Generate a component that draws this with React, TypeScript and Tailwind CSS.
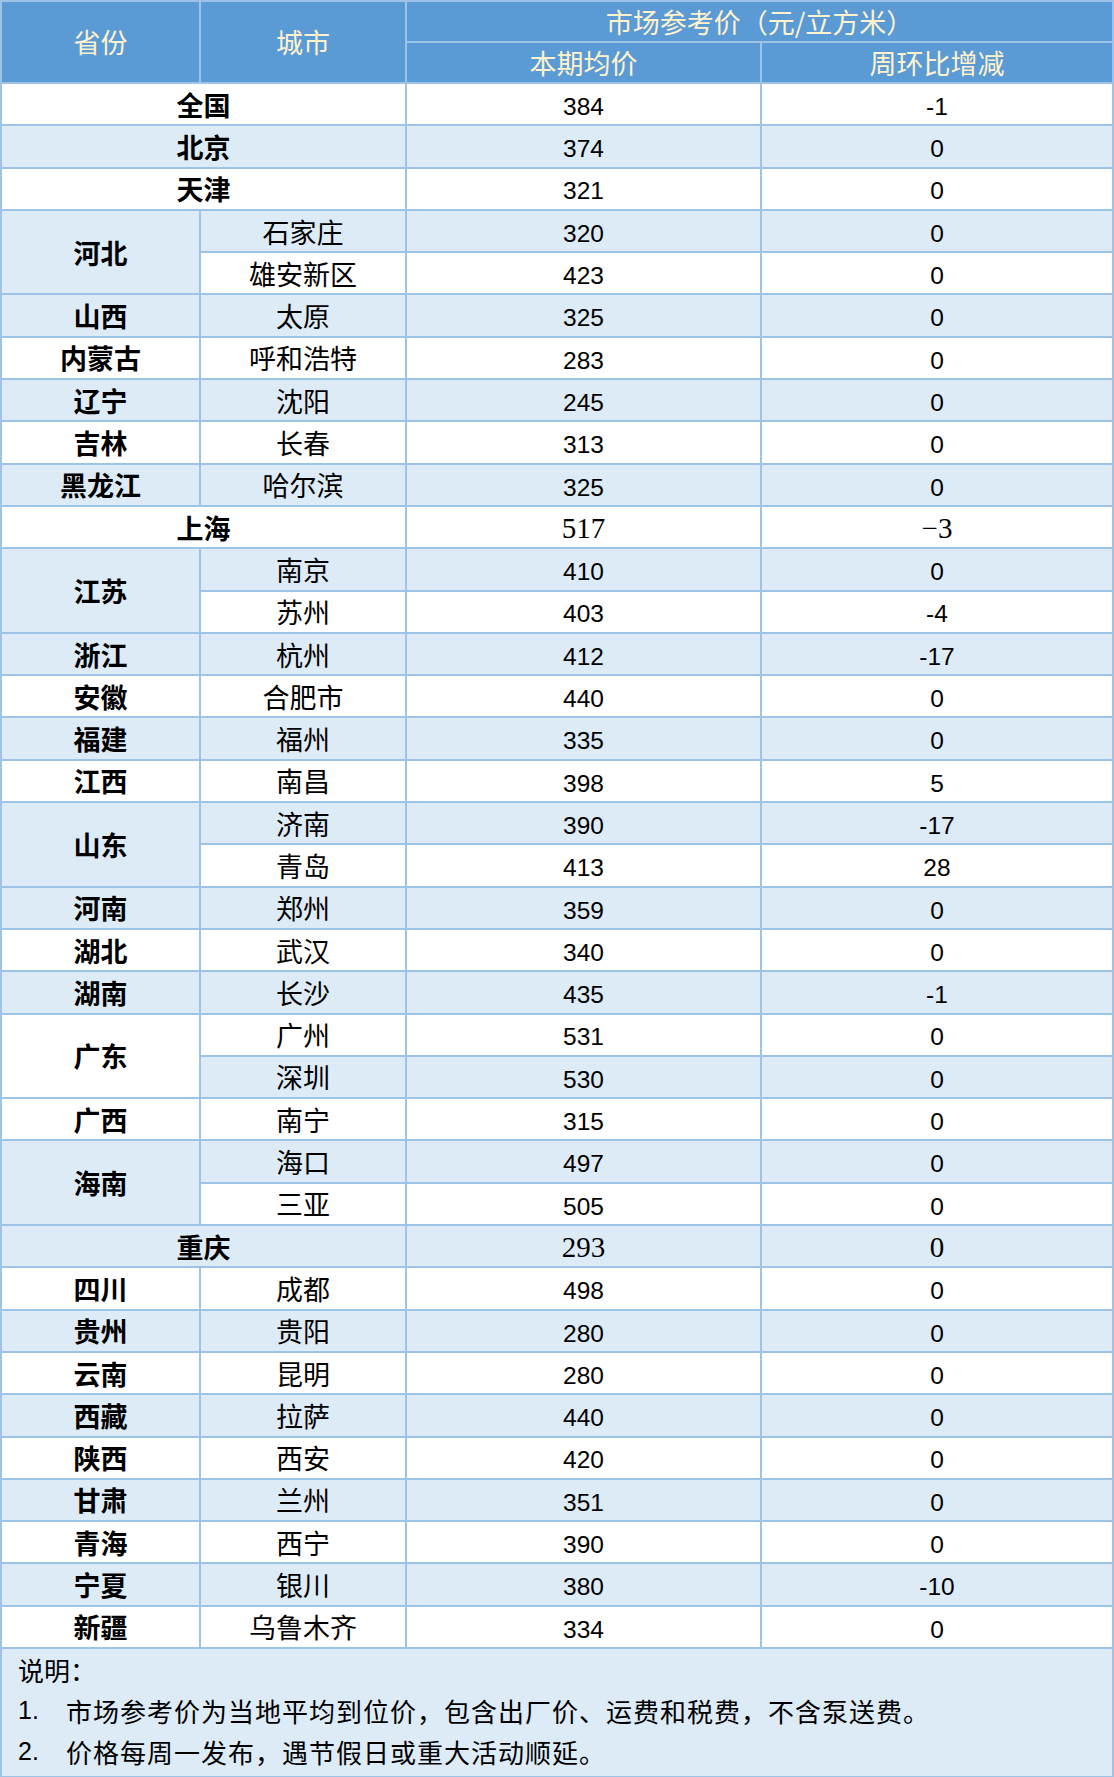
import React from 'react';

type Row = {
  prov?: string;
  span?: number;
  city?: string;
  merged?: boolean;
  price: string;
  diff: string;
  serif?: boolean;
};

const rows: Row[] = [
  { prov: '全国', merged: true, price: '384', diff: '-1' },
  { prov: '北京', merged: true, price: '374', diff: '0' },
  { prov: '天津', merged: true, price: '321', diff: '0' },
  { prov: '河北', span: 2, city: '石家庄', price: '320', diff: '0' },
  { city: '雄安新区', price: '423', diff: '0' },
  { prov: '山西', city: '太原', price: '325', diff: '0' },
  { prov: '内蒙古', city: '呼和浩特', price: '283', diff: '0' },
  { prov: '辽宁', city: '沈阳', price: '245', diff: '0' },
  { prov: '吉林', city: '长春', price: '313', diff: '0' },
  { prov: '黑龙江', city: '哈尔滨', price: '325', diff: '0' },
  { prov: '上海', merged: true, price: '517', diff: '−3', serif: true },
  { prov: '江苏', span: 2, city: '南京', price: '410', diff: '0' },
  { city: '苏州', price: '403', diff: '-4' },
  { prov: '浙江', city: '杭州', price: '412', diff: '-17' },
  { prov: '安徽', city: '合肥市', price: '440', diff: '0' },
  { prov: '福建', city: '福州', price: '335', diff: '0' },
  { prov: '江西', city: '南昌', price: '398', diff: '5' },
  { prov: '山东', span: 2, city: '济南', price: '390', diff: '-17' },
  { city: '青岛', price: '413', diff: '28' },
  { prov: '河南', city: '郑州', price: '359', diff: '0' },
  { prov: '湖北', city: '武汉', price: '340', diff: '0' },
  { prov: '湖南', city: '长沙', price: '435', diff: '-1' },
  { prov: '广东', span: 2, city: '广州', price: '531', diff: '0' },
  { city: '深圳', price: '530', diff: '0' },
  { prov: '广西', city: '南宁', price: '315', diff: '0' },
  { prov: '海南', span: 2, city: '海口', price: '497', diff: '0' },
  { city: '三亚', price: '505', diff: '0' },
  { prov: '重庆', merged: true, price: '293', diff: '0', serif: true },
  { prov: '四川', city: '成都', price: '498', diff: '0' },
  { prov: '贵州', city: '贵阳', price: '280', diff: '0' },
  { prov: '云南', city: '昆明', price: '280', diff: '0' },
  { prov: '西藏', city: '拉萨', price: '440', diff: '0' },
  { prov: '陕西', city: '西安', price: '420', diff: '0' },
  { prov: '甘肃', city: '兰州', price: '351', diff: '0' },
  { prov: '青海', city: '西宁', price: '390', diff: '0' },
  { prov: '宁夏', city: '银川', price: '380', diff: '-10' },
  { prov: '新疆', city: '乌鲁木齐', price: '334', diff: '0' },
];

const cjk = "font-['Noto_Sans_CJK_SC',sans-serif]";
const num = "font-['Liberation_Sans','Noto_Sans_CJK_SC',sans-serif] text-[24.5px] pt-[6px]";
const serifNum = "font-['Liberation_Serif',serif] text-[29px] pt-[3px]";
const cell = 'border-2 border-[#9dc3e6] text-center align-middle p-0';

export default function App() {
  return (
    <div className="bg-white w-[1114px] text-black">
      <table className="table-fixed border-collapse w-[1112px]">
        <colgroup>
          <col className="w-[199px]" />
          <col className="w-[206px]" />
          <col className="w-[355px]" />
          <col className="w-[352px]" />
        </colgroup>
        <thead>
          <tr className="h-[41px] bg-[#5b9bd5] text-[#fff2cc] text-[27px] font-normal">
            <th rowSpan={2} className={`${cell} ${cjk} font-normal`}>省份</th>
            <th rowSpan={2} className={`${cell} ${cjk} font-normal`}>城市</th>
            <th colSpan={2} className={`${cell} ${cjk} font-normal leading-none`}>市场参考价（元/立方米）</th>
          </tr>
          <tr className="h-[41px] bg-[#5b9bd5] text-[#fff2cc] text-[27px]">
            <th className={`${cell} ${cjk} font-normal leading-none`}>本期均价</th>
            <th className={`${cell} ${cjk} font-normal leading-none`}>周环比增减</th>
          </tr>
        </thead>
        <tbody>
          {rows.map((r, i) => {
            const bg = i % 2 === 0 ? 'bg-white' : 'bg-[#ddebf7]';
            const n = r.serif ? serifNum : num;
            return (
              <tr key={i} className={`h-[42.3px] ${bg}`}>
                {r.merged ? (
                  <td colSpan={2} className={`${cell} ${cjk} font-bold text-[27px] leading-none`}>
                    {r.prov}
                  </td>
                ) : (
                  <>
                    {r.prov && (
                      <td rowSpan={r.span ?? 1} className={`${cell} ${cjk} font-bold text-[27px] leading-none`}>
                        {r.prov}
                      </td>
                    )}
                    <td className={`${cell} ${cjk} text-[27px] leading-none`}>{r.city}</td>
                  </>
                )}
                <td className={`${cell} ${n} leading-none`}>{r.price}</td>
                <td className={`${cell} ${n} leading-none`}>{r.diff}</td>
              </tr>
            );
          })}
          <tr className="bg-[#ddebf7]">
            <td colSpan={4} className={`border-2 border-[#9dc3e6] p-0 pl-[16px] pb-[4px] ${cjk} text-[26px] leading-[41px] text-left`}>
              <div>说明：</div>
              <div className="flex">
                <span className="w-[48px] font-['Liberation_Sans',sans-serif] text-[25px]">1.</span>
                <span className="tracking-[1px]">市场参考价为当地平均到位价，包含出厂价、运费和税费，不含泵送费。</span>
              </div>
              <div className="flex">
                <span className="w-[48px] font-['Liberation_Sans',sans-serif] text-[25px]">2.</span>
                <span className="tracking-[1px]">价格每周一发布，遇节假日或重大活动顺延。</span>
              </div>
            </td>
          </tr>
        </tbody>
      </table>
    </div>
  );
}
